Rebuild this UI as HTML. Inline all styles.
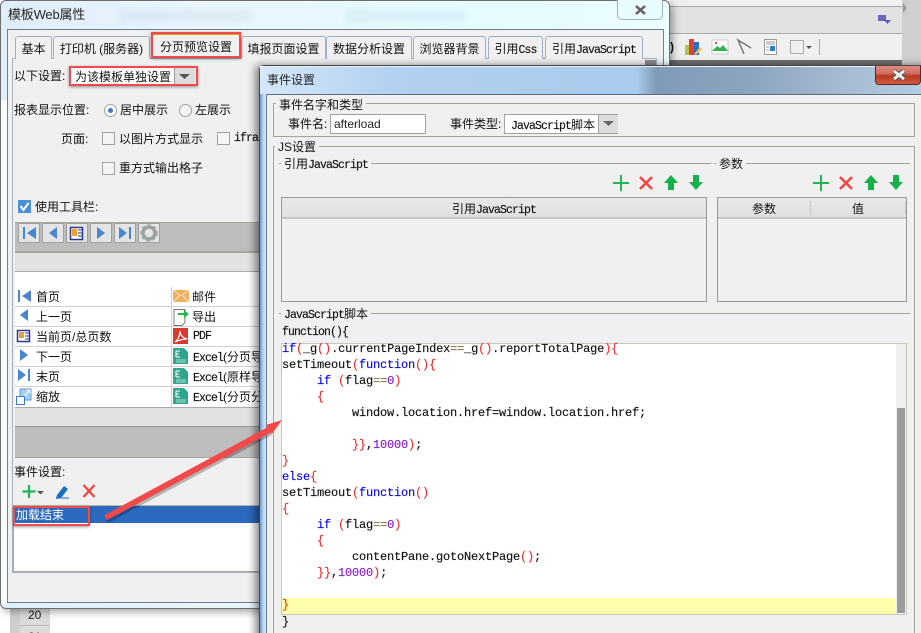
<!DOCTYPE html>
<html><head><meta charset="utf-8">
<style>
html,body{margin:0;padding:0;width:921px;height:633px;overflow:hidden;background:#fff}
body{position:relative;font-family:"Liberation Sans","Noto Sans CJK SC",sans-serif;font-size:12px;color:#111}
.a{position:absolute;box-sizing:border-box}
.t{position:absolute;white-space:pre;height:16px;line-height:16px;font-size:12px;color:#111}
.m{font-family:"Liberation Mono","Noto Sans CJK SC",monospace;font-size:11.500px;letter-spacing:-.9px;font-weight:normal;-webkit-text-stroke:.15px #112}
.tab{position:absolute;top:36px;height:23px;box-sizing:border-box;border:1px solid #9fb0c6;border-bottom:none;border-radius:3px 3px 0 0;background:#f0f0f0;text-align:center;line-height:25px;white-space:pre}
.cb{position:absolute;width:13px;height:13px;box-sizing:border-box;border:1px solid #a0a0a0;background:#f4f4f4}
.tb{position:absolute;top:223px;width:22px;height:20px;box-sizing:border-box;border:1px solid #a0a0a0;background:#e4e4e4}
.row{position:absolute;left:15px;width:245px;height:1px;background:#d0d0d0}
.grp{position:absolute;box-sizing:border-box;border:1px solid #a3a397}
.lbl{position:absolute;white-space:pre;height:14px;line-height:14px;background:#f0f0f0;padding:0 3px}
.ln{position:absolute;height:1px;background:#a3a397}
.th{position:absolute;background:linear-gradient(#e8e8e8,#e0e0e0);border-bottom:2px solid #c6c6c6;box-sizing:border-box;text-align:center;line-height:22px;white-space:pre}
.c{position:absolute;left:282px;white-space:pre;height:16px;line-height:16px;font-family:"Liberation Mono",monospace;font-size:12px;letter-spacing:-.2px;color:#111;-webkit-text-stroke:.15px currentColor}
.c b{font-weight:normal;color:#0a0ae0}.c i{font-style:normal;color:#f03030}.c u{text-decoration:none;color:#8a20d0}.c s{text-decoration:none;color:#8a7a50}
</style></head><body>

<!-- background app -->
<div class="a" style="left:0;top:0;width:921px;height:633px;background:#fff"></div>
<div class="a" style="left:669px;top:0;width:233px;height:7px;background:#f0f0f0;border-bottom:1px solid #a8a8a8"></div>
<div class="a" style="left:669px;top:7px;width:233px;height:27px;background:#e2e2e2;border-bottom:1px solid #aaa"></div>
<div class="a" style="left:669px;top:34px;width:233px;height:26px;background:#f0f0f0"></div>
<div class="a" style="left:669px;top:60px;width:233px;height:6px;background:#707070"></div>
<div class="a" style="left:902px;top:0;width:19px;height:66px;background:#cfcfcf"></div>
<div class="a" style="left:10px;top:606px;width:40px;height:27px;background:#dcdcdc"></div>
<div class="a" style="left:10px;top:606px;width:10px;height:27px;background:#cfcfcf"></div>
<div class="a" style="left:20px;top:625px;width:30px;height:1px;background:#bbb"></div>
<div class="t" style="left:28px;top:607px;color:#222">20</div>
<div class="t" style="left:28px;top:629px;color:#222">21</div>
<div class="t" style="left:670px;top:39px;font-weight:bold">)</div>

<!-- window 1 -->
<div class="a" style="left:0;top:0;width:670px;height:609px;border:1px solid #6e6e6e;border-radius:6px;background:linear-gradient(90deg,#dfeefb 0,#eaf5fd 30%,#e4fbff 70%,#ecfdff 100%);box-shadow:3px 3px 8px rgba(0,0,0,.35)"></div>
<div class="a" style="left:1px;top:100px;width:6px;height:504px;background:#f6fbfc"></div>
<div class="a" style="left:120px;top:10px;width:130px;height:12px;background:rgba(150,185,215,.14);filter:blur(3px)"></div>
<div class="a" style="left:345px;top:10px;width:120px;height:12px;background:rgba(150,185,215,.14);filter:blur(3px)"></div>
<div class="a" style="left:617px;top:0;width:46px;height:20px;border:1px solid #9fb0c0;border-top:none;border-radius:0 0 5px 5px;background:#e8fbfd"></div>
<div class="t" style="left:8px;top:7px;font-size:13px;letter-spacing:-.2px;color:#222">模板Web属性</div>
<div class="a" style="left:7px;top:29px;width:657px;height:574px;background:#f0f0f0;border:1px solid #6f7f8f"></div>
<div class="a" style="left:12px;top:58px;width:645px;height:515px;border:1px solid #a6b2c2"></div>

<div class="tab" style="left:15px;width:37px">基本</div>
<div class="tab" style="left:53px;width:97px">打印机 (服务器)</div>
<div class="tab" style="left:151px;width:90px;top:33px;height:25px;border-top:2px solid #d8a000;line-height:24px">分页预览设置</div>
<div class="tab" style="left:241px;width:85px">填报页面设置</div>
<div class="tab" style="left:326px;width:86px">数据分析设置</div>
<div class="tab" style="left:413px;width:73px">浏览器背景</div>
<div class="tab" style="left:488px;width:55px">引用<span class="m">Css</span></div>
<div class="tab" style="left:545px;width:98px">引用<span class="m">JavaScript</span></div>
<div class="a" style="left:645px;top:60px;width:11px;height:8px;background:#8a8a8a"></div>
<div class="a" style="left:151px;top:32px;width:90px;height:26px;border:2px solid #f04a4a;box-shadow:0 1px 3px rgba(0,0,0,.4)"></div>

<div class="t" style="left:14px;top:68px">以下设置:</div>
<div class="a" style="left:71px;top:67px;width:124px;height:18px;background:#fff"></div>
<div class="a" style="left:174px;top:67px;width:21px;height:18px;background:#dcdcdc;border-left:1px solid #999"></div>
<div class="t" style="left:75px;top:69px">为该模板单独设置</div>
<div class="a" style="left:69px;top:66px;width:129px;height:20px;border:2px solid #f04a4a;box-shadow:0 1px 3px rgba(0,0,0,.4)"></div>

<div class="t" style="left:14px;top:102px">报表显示位置:</div>
<div class="a" style="left:104px;top:104px;width:13px;height:13px;border-radius:50%;border:1px solid #a0a0a0;background:#fff"></div>
<div class="a" style="left:108px;top:108px;width:5px;height:5px;border-radius:50%;background:#3a78c8"></div>
<div class="t" style="left:120px;top:102px">居中展示</div>
<div class="a" style="left:179px;top:104px;width:13px;height:13px;border-radius:50%;border:1px solid #a0a0a0;background:#f4f4f4"></div>
<div class="t" style="left:195px;top:102px">左展示</div>
<div class="t" style="left:61px;top:131px">页面:</div>
<div class="cb" style="left:102px;top:132px"></div>
<div class="t" style="left:119px;top:131px">以图片方式显示</div>
<div class="cb" style="left:217px;top:132px"></div>
<div class="t m" style="left:234px;top:131px">ifra</div>
<div class="cb" style="left:102px;top:162px"></div>
<div class="t" style="left:119px;top:160px">重方式输出格子</div>
<div class="cb" style="left:18px;top:200px;background:#4a90d8;border-color:#4a90d8"></div>
<div class="t" style="left:35px;top:199px">使用工具栏:</div>

<div class="a" style="left:15px;top:222px;width:245px;height:31px;background:#bdbdbd;border-top:1px solid #a8a89a;border-bottom:2px solid #a8a89a"></div>
<div class="tb" style="left:18px"></div><div class="tb" style="left:42px"></div><div class="tb" style="left:66px"></div><div class="tb" style="left:90px"></div><div class="tb" style="left:114px"></div><div class="tb" style="left:138px"></div>
<div class="a" style="left:15px;top:253px;width:245px;height:19px;background:#e2e2e2;border-bottom:1px solid #aaa"></div>
<div class="a" style="left:15px;top:272px;width:245px;height:135px;background:#fff"></div>
<div class="a" style="left:171px;top:287px;width:1px;height:120px;background:#d0d0d0"></div>
<div class="row" style="top:306px"></div><div class="row" style="top:326px"></div><div class="row" style="top:346px"></div><div class="row" style="top:366px"></div><div class="row" style="top:386px"></div>
<div class="t" style="left:36px;top:289px">首页</div>
<div class="t" style="left:36px;top:309px">上一页</div>
<div class="t" style="left:36px;top:329px">当前页/总页数</div>
<div class="t" style="left:36px;top:349px">下一页</div>
<div class="t" style="left:36px;top:369px">末页</div>
<div class="t" style="left:36px;top:389px">缩放</div>
<div class="t" style="left:192px;top:289px">邮件</div>
<div class="t" style="left:192px;top:309px">导出</div>
<div class="t m" style="left:193px;top:329px">PDF</div>
<div class="t" style="left:193px;top:349px"><span class="m">Excel</span>(分页导出)</div>
<div class="t" style="left:193px;top:369px"><span class="m">Excel</span>(原样导出)</div>
<div class="t" style="left:193px;top:389px"><span class="m">Excel</span>(分页分</div>
<div class="a" style="left:15px;top:407px;width:245px;height:20px;background:#e2e2e2;border-top:1px solid #aaa;border-bottom:1px solid #999"></div>
<div class="a" style="left:15px;top:427px;width:245px;height:31px;background:#bdbdbd;border-bottom:1px solid #a8a89a"></div>
<div class="t" style="left:14px;top:464px">事件设置:</div>
<div class="a" style="left:13px;top:505px;width:247px;height:67px;background:#fff;border-left:1px solid #a8a89a;border-top:1px solid #b8b8aa;border-bottom:1px solid #a8a89a"></div>
<div class="a" style="left:14px;top:506px;width:246px;height:17px;background:#2b6abf"></div>
<div class="t" style="left:16px;top:507px;color:#fff">加载结束</div>
<div class="a" style="left:13px;top:506px;width:77px;height:20px;border:2px solid #f04a4a;box-shadow:0 1px 3px rgba(0,0,0,.4)"></div>

<!-- dialog -->
<div class="a" style="left:259px;top:65px;width:670px;height:580px;background:#bcd9f6;border:1px solid #444;border-radius:5px 0 0 0;box-shadow:-4px 0 8px rgba(0,0,0,.45)"></div>
<div class="a" style="left:260px;top:66px;width:661px;height:28px;border-top:1px solid #e8f0f8;background:linear-gradient(90deg,#d6e8f9 0,#b2d0f0 20%,#a9cbee 57%,#7f9ab8 60%,#8da5c0 75%,#a6bad0 88%,#b4cde4 100%)"></div>
<div class="a" style="left:260px;top:94px;width:6px;height:539px;background:linear-gradient(90deg,#6f98c4,#bcdcfb 60%,#cfe4f8)"></div>
<div class="a" style="left:875px;top:66px;width:46px;height:19px;border:1px solid #5a2a2a;border-top:none;border-radius:0 0 4px 4px;background:linear-gradient(#e08a80 0,#d07060 40%,#b83a20 55%,#d05a40 100%)"></div>
<div class="t" style="left:267px;top:72px;font-size:12px;color:#222">事件设置</div>
<div class="a" style="left:266px;top:94px;width:655px;height:539px;background:#f0f0f0;border-top:1px solid #5f6f80;border-left:1px solid #6f7f8f"></div>

<div class="grp" style="left:273px;top:103px;width:642px;height:34px"></div>
<div class="lbl" style="left:276px;top:98px;">事件名字和类型</div>
<div class="t" style="left:288px;top:116px">事件名:</div>
<div class="a" style="left:330px;top:114px;width:96px;height:20px;background:#fff;border:1px solid #a0a0a0"></div>
<div class="t" style="left:334px;top:116px;color:#222">afterload</div>
<div class="t" style="left:450px;top:116px">事件类型:</div>
<div class="a" style="left:504px;top:114px;width:114px;height:20px;background:#fff;border:1px solid #a0a0a0"></div>
<div class="a" style="left:598px;top:115px;width:20px;height:18px;background:#dcdcdc;border-left:1px solid #a0a0a0"></div>
<div class="t" style="left:511px;top:117px"><span class="m">JavaScript</span>脚本</div>

<div class="grp" style="left:273px;top:146px;width:642px;height:500px"></div>
<div class="lbl" style="left:275px;top:140px">JS设置</div>
<div class="ln" style="left:279px;top:163px;width:432px"></div>
<div class="lbl" style="left:281px;top:157px">引用<span class="m">JavaScript</span></div>
<div class="ln" style="left:714px;top:163px;width:196px"></div>
<div class="lbl" style="left:716px;top:157px">参数</div>

<div class="a" style="left:281px;top:197px;width:426px;height:105px;border:1px solid #999"></div>
<div class="th" style="left:282px;top:198px;width:424px;height:21px">引用<span class="m">JavaScript</span></div>
<div class="a" style="left:717px;top:197px;width:190px;height:105px;border:1px solid #999"></div>
<div class="th" style="left:718px;top:198px;width:188px;height:21px"></div>
<div class="t" style="left:752px;top:201px">参数</div>
<div class="t" style="left:852px;top:201px">值</div>
<div class="a" style="left:810px;top:201px;width:1px;height:14px;background:#c8c8bc"></div>
<div class="a" style="left:905px;top:201px;width:1px;height:14px;background:#c8c8bc"></div>

<div class="ln" style="left:279px;top:313px;width:631px"></div>
<div class="lbl" style="left:281px;top:307px"><span class="m">JavaScript</span>脚本</div>
<div class="t m" style="left:282px;top:325px">function(){</div>
<div class="a" style="left:281px;top:343px;width:626px;height:272px;background:#fff;border:1px solid #c8c8bc"></div>
<div class="a" style="left:282px;top:598px;width:614px;height:16px;background:#ffffaa"></div>
<div class="a" style="left:896px;top:344px;width:10px;height:270px;background:#f0f0f0"></div>
<div class="a" style="left:897px;top:408px;width:8px;height:205px;background:#9b9b9b"></div>

<div class="c" style="top:341px"><b>if</b><i>(</i>_g<i>()</i>.currentPageIndex<s>==</s>_g<i>()</i>.reportTotalPage<i>){</i></div>
<div class="c" style="top:357px">setTimeout<i>(</i><b>function</b><i>(){</i></div>
<div class="c" style="top:373px;left:317px"><b>if</b> <i>(</i>flag<s>==</s><u>0</u><i>)</i></div>
<div class="c" style="top:389px;left:317px"><i>{</i></div>
<div class="c" style="top:405px;left:352px">window.location.href=window.location.href;</div>
<div class="c" style="top:437px;left:352px"><i>}}</i>,<u>10000</u><i>)</i>;</div>
<div class="c" style="top:453px"><i>}</i></div>
<div class="c" style="top:469px"><b>else</b><i>{</i></div>
<div class="c" style="top:485px">setTimeout<i>(</i><b>function</b><i>()</i></div>
<div class="c" style="top:501px"><i>{</i></div>
<div class="c" style="top:517px;left:317px"><b>if</b> <i>(</i>flag<s>==</s><u>0</u><i>)</i></div>
<div class="c" style="top:533px;left:317px"><i>{</i></div>
<div class="c" style="top:549px;left:352px">contentPane.gotoNextPage<i>()</i>;</div>
<div class="c" style="top:565px;left:317px"><i>}}</i>,<u>10000</u><i>)</i>;</div>
<div class="c" style="top:597px"><i>}</i></div>
<div class="c" style="top:614px">}</div>

<!-- icons overlay -->
<svg class="a" style="left:0;top:0" width="921" height="633" viewBox="0 0 921 633">
 <!-- close buttons -->
 <path d="M636 6l9 8M645 6l-9 8" stroke="#fff" stroke-width="5"/>
 <path d="M636 6l9 8M645 6l-9 8" stroke="#666" stroke-width="2.600"/>
 <path d="M894 71l10 8M904 71l-10 8" stroke="#555" stroke-width="5"/>
 <path d="M894 71l10 8M904 71l-10 8" stroke="#f4f4f4" stroke-width="2.800"/>
 <!-- checkbox tick -->
 <path d="M20.500 206l3 4 5-7" fill="none" stroke="#fff" stroke-width="2"/>
 <!-- combo arrows -->
 <path d="M179 74h11l-5.500 5z" fill="#555"/>
 <path d="M603 121h11l-5.500 5z" fill="#666"/>
 <!-- toolbar -->
 <g fill="#4a86cf">
  <path d="M23 227h2v12h-2zM36 227v12l-9-6z"/>
  <path d="M57 227v12l-8-6z"/>
  <path d="M97 227v12l8-6z"/>
  <path d="M119 227l8 6-8 6zM129 227h2v12h-2z"/>
  <path d="M18 290h2v12h-2zM31 290v12l-9-6z"/>
  <path d="M28 309v12l-8-6z"/>
  <path d="M20 349v12l8-6z"/>
  <path d="M18 369l8 6-8 6zM28 369h2v12h-2z"/>
 </g>
 <g>
  <rect x="70.500" y="227.500" width="12" height="12" fill="#fff" stroke="#2a3a8a" stroke-width="1.500"/>
  <rect x="72" y="229" width="5" height="7" fill="#f0a030"/>
  <path d="M78 230h4M78 233h4M78 236h4" stroke="#2a3a8a"/>
  <rect x="17.500" y="330.500" width="12" height="11" fill="#fff" stroke="#2a3a8a" stroke-width="1.500"/>
  <rect x="19" y="332" width="5" height="6" fill="#f0a030"/>
  <path d="M25 333h4M25 336h4M25 339h4" stroke="#2a3a8a"/>
 </g>
 <circle cx="149" cy="233" r="6" fill="none" stroke="#9aa4a4" stroke-width="3.500"/>
 <circle cx="149" cy="233" r="8" fill="none" stroke="#9aa4a4" stroke-width="1.500" stroke-dasharray="3 3"/>
 <!-- zoom icon -->
 <rect x="20" y="389" width="11" height="11" fill="#a8cdf0" stroke="#5a9ad8"/>
 <rect x="16.500" y="396.500" width="8" height="8" fill="#fff" stroke="#3a7ac8"/>
 <path d="M24 396l6-6M26 390h4v4" stroke="#fff" fill="none"/>
 <!-- mail -->
 <rect x="173" y="290" width="16" height="12" fill="#f0b060"/>
 <path d="M173 290l8 6 8-6M173 302l6-6M189 302l-6-6" stroke="#fbe8c8" fill="none"/>
 <!-- export -->
 <path d="M174 309.500h11v13l-3 3h-8z" fill="#fff" stroke="#777"/>
 <path d="M178 313h6v-3l5 4-5 4v-3h-6z" fill="#2db34a"/>
 <!-- pdf -->
 <rect x="173" y="328" width="15" height="16" fill="#d83a30"/>
 <path d="M175 342c3-2 5-7 5-11 0 4 3 7 7 8-4 0-8 1-12 3z" fill="none" stroke="#fff" stroke-width="1.200"/>
 <!-- excel -->
 <g>
  <path d="M173 348h11l4 4v12h-15z" fill="#2ea58c"/><path d="M176 351h4M176 351v6M176 354h3M176 357h4" stroke="#fff"/><path d="M176 360h10M176 362h10" stroke="#a5e0d0"/>
  <path d="M173 368h11l4 4v12h-15z" fill="#2ea58c"/><path d="M176 371h4M176 371v6M176 374h3M176 377h4" stroke="#fff"/><path d="M176 380h10M176 382h10" stroke="#a5e0d0"/>
  <path d="M173 388h11l4 4v12h-15z" fill="#2ea58c"/><path d="M176 391h4M176 391v6M176 394h3M176 397h4" stroke="#fff"/><path d="M176 400h10M176 402h10" stroke="#a5e0d0"/>
 </g>
 <!-- event buttons -->
 <path d="M29 485v13M22.500 491.500h13" stroke="#22b455" stroke-width="2.200"/>
 <path d="M37 491h7l-3.500 3.500z" fill="#555"/>
 <path d="M57 495l7-9 4 3-7 9-5 1z" fill="#1a70c0"/><path d="M56 498h13" stroke="#1a70c0"/>
 <path d="M83.500 485l11 12M94.500 485l-11 12" stroke="#ee4a40" stroke-width="2.400"/>
 <!-- + x up down -->
 <g stroke="#22b455" stroke-width="2" fill="none"><path d="M621 175v16M613 183h16"/><path d="M821 175v16M813 183h16"/></g>
 <g stroke="#ee4a40" stroke-width="2.600" fill="none"><path d="M640 177l12 12M652 177l-12 12"/><path d="M840 177l12 12M852 177l-12 12"/></g>
 <g fill="#18b04a">
  <path d="M671 175l7 8h-4v7h-6v-7h-4z"/><path d="M871 175l7 8h-4v7h-6v-7h-4z"/>
  <path d="M693 175h6v7h4l-7 8-7-8h4z"/><path d="M893 175h6v7h4l-7 8-7-8h4z"/>
 </g>
 <!-- right toolbar icons -->
 <rect x="685" y="45" width="5" height="10" fill="#b5c34a"/><rect x="689" y="39" width="5" height="16" fill="#e2403a"/><rect x="694" y="42" width="5" height="13" fill="#2a70c0"/>
 <path d="M694 54l6-7 2 2-6 6z" fill="#f0c060"/>
 <rect x="712" y="40" width="16" height="14" fill="#fff" stroke="#ccc"/>
 <path d="M712 51l5-5 3 2 3-3 5 6z" fill="#35b050"/>
 <rect x="715" y="42" width="2" height="2" fill="#e05030"/>
 <path d="M751 48l-13-8 6 14" fill="none" stroke="#777" stroke-width="1.500"/>
 <rect x="764.500" y="39.500" width="12" height="15" fill="#fff" stroke="#999"/>
 <rect x="770" y="46" width="5" height="5" fill="#2a80d0"/><path d="M766 42h9M766 44h9M766 47h3M766 50h3" stroke="#99a"/>
 <rect x="790.500" y="40.500" width="13" height="13" fill="none" stroke="#aaa"/>
 <path d="M806 46h6l-3 3z" fill="#555"/>
 <path d="M819.500 39v16" stroke="#aaa"/>
 <path d="M878 15h8v6h-8z" fill="#6a6ab8"/><path d="M884 20h7l-3.500 4z" fill="#5a5ac0"/>
 <path d="M903 3l4 5-4 5z" fill="#999"/>
 <!-- arrow -->
 <path d="M105 516L107 520 271 432 269 427z" fill="rgba(0,0,0,.25)" transform="translate(1,3)"/>
 <path d="M105 515.500L107 519.500 271 432 269 427z" fill="#f04a4a" stroke="#f04a4a" stroke-linejoin="round"/>
 <path d="M282 420L266 425 272 434z" fill="#f04a4a"/>
</svg>
</body></html>
